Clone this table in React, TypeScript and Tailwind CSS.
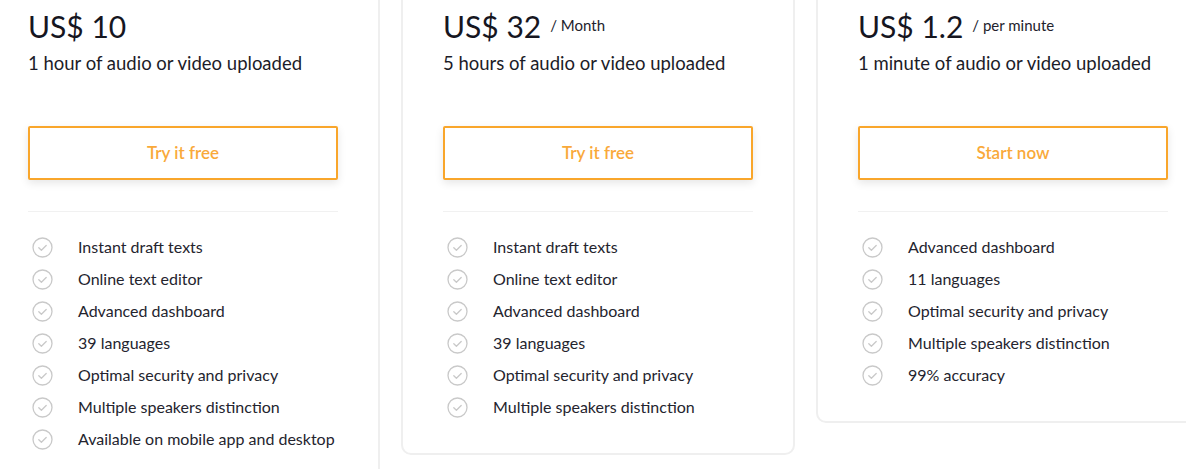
const plans = [
  {
    price: "US$ 10",
    unit: "",
    desc: "1 hour of audio or video uploaded",
    cta: "Try it free",
    features: [
      "Instant draft texts",
      "Online text editor",
      "Advanced dashboard",
      "39 languages",
      "Optimal security and privacy",
      "Multiple speakers distinction",
      "Available on mobile app and desktop",
    ],
  },
  {
    price: "US$ 32",
    unit: "/ Month",
    desc: "5 hours of audio or video uploaded",
    cta: "Try it free",
    features: [
      "Instant draft texts",
      "Online text editor",
      "Advanced dashboard",
      "39 languages",
      "Optimal security and privacy",
      "Multiple speakers distinction",
    ],
  },
  {
    price: "US$ 1.2",
    unit: "/ per minute",
    desc: "1 minute of audio or video uploaded",
    cta: "Start now",
    features: [
      "Advanced dashboard",
      "11 languages",
      "Optimal security and privacy",
      "Multiple speakers distinction",
      "99% accuracy",
    ],
  },
];

const CheckCircle = () => (
  <svg width="21" height="21" viewBox="0 0 21 21" fill="none" className="shrink-0">
    <circle cx="10.5" cy="10.5" r="9.5" stroke="#c9c9c9" strokeWidth="1.3" />
    <path d="M6.8 10.8l2.6 2.5 4.8-4.8" stroke="#c9c9c9" strokeWidth="1.3" strokeLinecap="round" strokeLinejoin="round" />
  </svg>
);

const PlanCard = ({ plan }: { plan: (typeof plans)[number] }) => {
  return (
    <div className="w-[394px] shrink-0 rounded-[10px] border-2 border-[#efefef] bg-white px-[40px] pt-[36px] pb-[30px]">
      <div className="flex items-start h-[36px]">
        <span className="text-[30px] leading-[36px] text-[#16161f]">{plan.price}</span>
        {plan.unit && (
          <span className="mt-[7px] ml-[9px] text-[15px] leading-[20px] text-[#22222c]">{plan.unit}</span>
        )}
      </div>
      <p className="mt-[5px] text-[18.5px] leading-[28px] text-[#1c1c28]">{plan.desc}</p>
      {/* CTA */}
      <button className="mt-[49px] flex h-[54px] w-full items-center justify-center rounded-[2px] border-2 border-[#f9a62b] bg-white text-[17px] font-semibold text-[#f9a93a] shadow-[0_3px_8px_rgba(0,0,0,0.10)]">
        {plan.cta}
      </button>
      <div className="mt-[31px] h-px bg-[#f1f1f1]" />
      <ul className="mt-[19px]">
        {plan.features.map((f) => (
          <li key={f} className="flex h-[32px] items-center">
            <span className="ml-[4px] flex w-[46px]">
              <CheckCircle />
            </span>
            <span className="text-[16px] text-[#24242e]">{f}</span>
          </li>
        ))}
      </ul>
    </div>
  );
};

export default function App() {
  return (
    <div className="h-[469px] w-full overflow-hidden bg-white" style={{ fontFamily: "Lato, 'Open Sans', sans-serif" }}>
      <div className="-mt-[30px] -ml-[14px] flex items-start gap-[21px]">
        {plans.map((p) => (
          <PlanCard key={p.price} plan={p} />
        ))}
      </div>
    </div>
  );
}
